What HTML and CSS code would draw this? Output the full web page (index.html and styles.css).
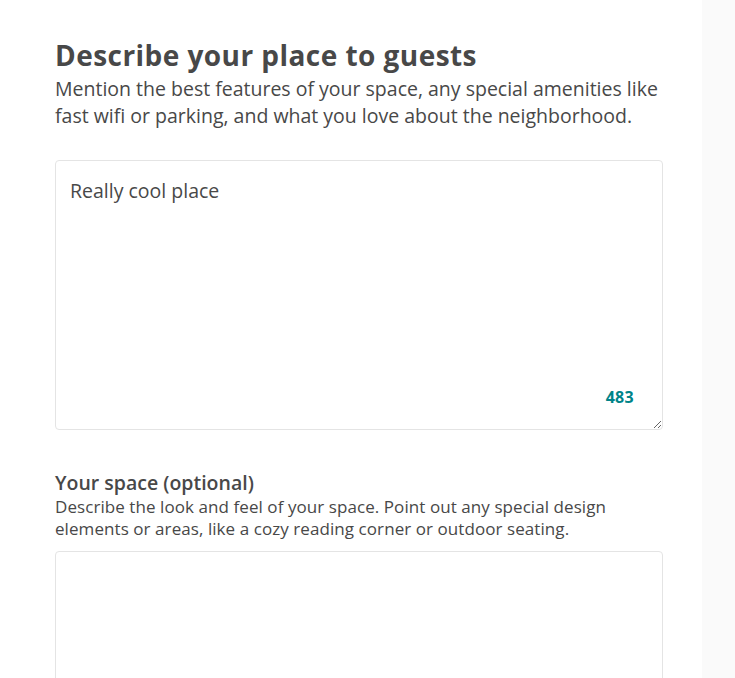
FILE: index.html
```html
<!DOCTYPE html>
<html>
<head>
<meta charset="utf-8">
<link rel="stylesheet" href="styles.css">
</head>
<body>
<div class="page">
  <main class="main">
    <h1 class="title">Describe your place to guests</h1>
    <p class="lead">Mention the best features of your space, any special amenities like fast wifi or parking, and what you love about the neighborhood.</p>
    <div class="field field-first">
      <textarea class="area area-big">Really cool place</textarea>
      <span class="counter">483</span>
    </div>
    <h2 class="label">Your space (optional)</h2>
    <p class="hint">Describe the look and feel of your space. Point out any special design elements or areas, like a cozy reading corner or outdoor seating.</p>
    <div class="field field-second">
      <textarea class="area area-second"></textarea>
    </div>
  </main>
  <aside class="side"></aside>
</div>
</body>
</html>
```
FILE: styles.css
```css
html, body {
  margin: 0;
  padding: 0;
  height: 100%;
  overflow: hidden;
}
body {
  font-family: "Open Sans", "Liberation Sans", sans-serif;
  color: #484848;
  background: #fff;
}
.page {
  display: flex;
  height: 678px;
}
.main {
  width: 608px;
  padding: 0 39px 0 55px;
  flex: none;
}
.side {
  flex: 1;
  background: #fafafa;
}
.title {
  margin: 35px 0 0;
  font-size: 28px;
  font-weight: 700;
  line-height: 40px;
  letter-spacing: 0.45px;
}
.lead {
  margin: 0;
  font-size: 19.5px;
  line-height: 27px;
  font-weight: 400;
}
.field {
  position: relative;
}
.field-first {
  margin-top: 31px;
}
.field-second {
  margin-top: 11px;
}
.area {
  display: block;
  box-sizing: border-box;
  width: 608px;
  border: 1px solid #e4e4e4;
  border-radius: 4px;
  padding: 16px 14px;
  font-family: inherit;
  font-size: 19.5px;
  line-height: 27px;
  color: #484848;
  background: #fff;
  outline: none;
}
.area-big {
  height: 270px;
}
.area-second {
  height: 200px;
}
.counter {
  position: absolute;
  right: 29px;
  top: 226px;
  font-size: 16px;
  line-height: 22px;
  font-weight: 700;
  letter-spacing: 0.3px;
  color: #008489;
}
.label {
  margin: 40px 0 0;
  font-size: 19.5px;
  font-weight: 600;
  line-height: 26px;
}
.hint {
  margin: 0;
  font-size: 17px;
  line-height: 22px;
  letter-spacing: 0.07px;
}
```
